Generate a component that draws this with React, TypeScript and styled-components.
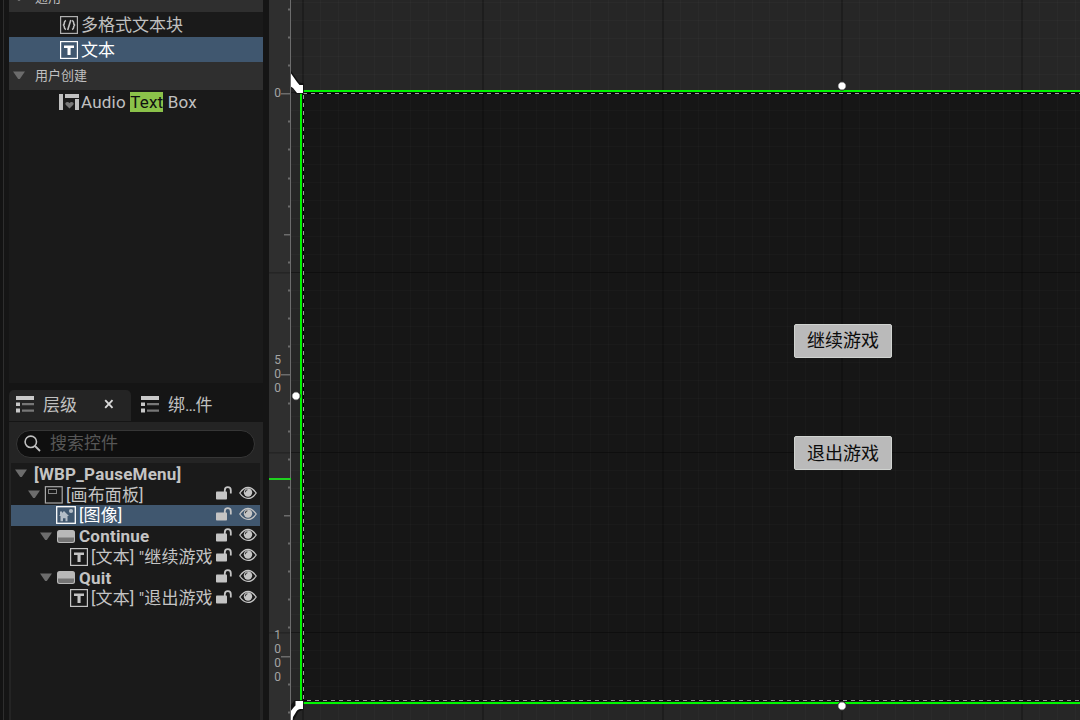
import React from "react";
import styled, { createGlobalStyle } from "styled-components";

const GlobalStyle = createGlobalStyle`
  * { box-sizing: border-box; }
  body {
    margin: 0;
    overflow: hidden;
    background: #151515;
    font-family: Roboto, "Noto Sans CJK SC", sans-serif;
    color: #c0c0c0;
  }
`;

const Editor = styled.div`
  display: flex;
  width: 1080px;
  height: 720px;
  overflow: hidden;
  background: #151515;
`;

const DockEdge = styled.div`
  flex: none;
  width: 4px;
  margin-right: 5px;
  background: #131313;
  border-right: 1px solid #2e2e2e;
`;

const Sidebar = styled.aside`
  flex: none;
  display: flex;
  flex-direction: column;
  width: 254px;
  margin-right: 6px;
`;

const Palette = styled.section`
  height: 383px;
  flex: none;
  overflow: hidden;
  background: #1a1a1a;
`;

const CategoryRow = styled.div<{ $clipped?: boolean }>`
  display: flex;
  align-items: center;
  height: 28px;
  margin-top: ${(p) => (p.$clipped ? "-16px" : "0")};
  padding: 0 0 1px 3px;
  gap: 9px;
  background: #2f2f2f;
  font-size: 13px;
  line-height: 28px;
`;

const PaletteRow = styled.div<{ $selected?: boolean }>`
  display: flex;
  align-items: center;
  height: 25px;
  padding-left: 50px;
  gap: 3px;
  background: ${(p) => (p.$selected ? "#40576f" : "transparent")};
  color: ${(p) => (p.$selected ? "#ffffff" : "#c0c0c0")};
  font-size: 17px;
  line-height: 25px;
  white-space: pre;
`;

const PaletteLabel = styled.span`
  padding-top: 2px;
`;

const LatinLabel = styled.span`
  margin-left: -1px;
  letter-spacing: 0.2px;
`;

const Match = styled.mark`
  display: inline-block;
  height: 20px;
  line-height: 20px;
  background: #8bc24a;
  color: #101010;
`;

const TabBar = styled.div`
  display: flex;
  flex: none;
  height: 32px;
  margin-top: 7px;
`;

const Tab = styled.div<{ $active?: boolean }>`
  display: flex;
  align-items: center;
  width: ${(p) => (p.$active ? "122px" : "110px")};
  height: 31px;
  padding: 0 17px 3px ${(p) => (p.$active ? "7px" : "10px")};
  gap: 9px;
  border-radius: 5px 5px 0 0;
  background: ${(p) => (p.$active ? "#242424" : "transparent")};
  font-size: 17px;
  line-height: 28px;
  white-space: nowrap;
`;

const TabLabel = styled.span`
  padding-top: 1px;
`;

const Ellipsis = styled.span`
  letter-spacing: -1px;
`;

const CloseButton = styled.span`
  display: flex;
  margin-left: auto;
`;

const Hierarchy = styled.section`
  flex: 1;
  display: flex;
  flex-direction: column;
  padding: 8px 3px 0 2px;
  background: #242424;
`;

const SearchBox = styled.div`
  display: flex;
  align-items: center;
  flex: none;
  width: 239px;
  height: 28px;
  margin: 0 0 5px 5px;
  padding: 0 0 1px 7px;
  gap: 9px;
  border: 1px solid #363636;
  border-radius: 14px;
  background: #0f0f0f;
  color: #575757;
  font-size: 17px;
  line-height: 25px;
`;

const Tree = styled.div`
  flex: 1;
  padding-top: 0.4px;
  background: #1a1a1a;
`;

const TreeRow = styled.div<{ $indent: number; $selected?: boolean; $bold?: boolean }>`
  display: flex;
  align-items: center;
  height: 20.75px;
  padding: 0 3px 0 ${(p) => p.$indent}px;
  background: ${(p) => (p.$selected ? "#40576f" : "transparent")};
  color: ${(p) => (p.$selected ? "#ffffff" : "#c4c4c4")};
  font-size: 17px;
  font-weight: ${(p) => (p.$bold ? 700 : 400)};
  letter-spacing: ${(p) => (p.$bold ? "0.22px" : "0.1px")};
  line-height: 20px;
  white-space: nowrap;
`;

const TreeName = styled.span<{ $gap: number }>`
  flex: 1;
  min-width: 0;
  height: 20px;
  margin-left: ${(p) => p.$gap}px;
`;

const RowActions = styled.span`
  display: flex;
  flex: none;
  align-items: center;
  gap: 7px;
  height: 18px;
  margin-bottom: 3px;
`;

const Ruler = styled.div`
  flex: none;
  width: 22px;
  height: 720px;
  background: #2f2f2f;
`;

const Surface = styled.main`
  position: relative;
  flex: 1;
  overflow: hidden;
  background: #262626;
`;

const Frame = styled.div`
  position: absolute;
  left: 11px;
  top: 92px;
  width: 900px;
  height: 611px;
  background: #161616;
`;

const Overlay = styled.svg`
  position: absolute;
  left: 0;
  top: 0;
`;

const CanvasButton = styled.div<{ $top: number; $drop?: number }>`
  position: absolute;
  left: 503px;
  top: ${(p) => p.$top}px;
  display: flex;
  align-items: center;
  justify-content: center;
  width: 98px;
  height: 34px;
  padding-top: ${(p) => p.$drop ?? 0}px;
  border: 1px solid #d0d3d0;
  border-radius: 2px;
  background: #bababa;
  color: #0c0c0c;
  font-size: 18px;
  line-height: 32px;
`;

const Chevron = () => (
  <svg width="14" height="9" viewBox="0 0 14 9">
    <path d="M1 .5h12L7.8 8H6.2Z" fill="#6c6c6c" />
  </svg>
);

const TextIcon = () => (
  <svg width="19" height="18" viewBox="0 0 19 18">
    <rect x="1.600" y=".6" width="16.800" height="16.800" fill="none" stroke="currentColor" strokeWidth="1.200" />
    <path d="M5 4.500h10v2.500h-3.400v7H8.500V7H5Z" fill="currentColor" />
  </svg>
);

const RichTextIcon = () => (
  <svg width="19" height="18" viewBox="0 0 19 18">
    <rect x="1.600" y=".6" width="16.800" height="16.800" fill="none" stroke="#b0b0b0" strokeWidth="1.200" />
    <path d="M7 4.500Q5.300 5 5.300 7T3.800 9Q5.300 9 5.300 11T7 13.500M13 4.500Q14.700 5 14.700 7T16.200 9Q14.700 9 14.700 11T13 13.500M11.800 4 8.700 14" fill="none" stroke="#c0c0c0" strokeWidth="1.600" />
  </svg>
);

const UserWidgetIcon = () => (
  <svg width="20" height="18" viewBox="0 1 20 18">
    <path d="M0 1h4v16H0ZM6 1h14v4H6ZM16 6h4v11h-4Z" fill="#c0c0c0" />
    <path d="M10.500 15.500 6.700 11.800c-1.500-2 1.800-4 3.800-1.800 2-2.200 5.300-.2 3.800 1.800Z" fill="#777" />
  </svg>
);

const ListIcon = () => (
  <svg width="18" height="17" viewBox="0 0 18 17">
    <path d="M0 0h18v4H0ZM0 6.500h4v3.500H0ZM0 12.500h4v4H0Z" fill="#c8c8c8" />
    <path d="M6 7h12v2.200H6ZM6 13.500h12v2.200H6Z" fill="#777" />
  </svg>
);

const CanvasPanelIcon = () => (
  <svg width="19" height="18" viewBox="0 0 19 18">
    <rect x="1.400" y=".7" width="16.800" height="16.300" fill="none" stroke="#a8a8a8" strokeWidth="1.200" />
    <rect x="4.500" y="3.500" width="8" height="4" fill="none" stroke="#858585" />
  </svg>
);

const ImageIcon = () => (
  <svg width="20" height="18" viewBox="0 0 20 18">
    <rect x=".7" y=".7" width="18.600" height="16.600" fill="none" stroke="#fff" strokeWidth="1.300" />
    <path d="m3 10 1-1V5.500h2V7l2-2 5 5h-1.500v5.300H9.500v-3h-2.500v3H4.500V10Z" fill="#b3bdc7" />
    <circle cx="15" cy="5" r="2.100" fill="#b3bdc7" />
  </svg>
);

const ButtonIcon = () => (
  <svg width="18" height="13" viewBox="0 0 18 13">
    <rect width="18" height="13" rx="2.500" fill="#b8b8b8" />
    <path d="M1 7.500h16V10q0 2-1.500 2h-13Q1 12 1 10Z" fill="#747474" />
  </svg>
);

const UnlockIcon = () => (
  <svg width="16" height="14" viewBox="0 0 16 14">
    <rect x="0" y="5.500" width="11" height="8" rx=".8" fill="#c4c4c4" />
    <path d="M8.800 6V4.200a3 3 0 0 1 6 0V7.500" fill="none" stroke="#c4c4c4" strokeWidth="1.800" />
  </svg>
);

const EyeIcon = () => (
  <svg width="18" height="14" viewBox="0 0 18 14">
    <path d="M.8 7Q4.500 1.500 9 1.500T17.200 7Q13.500 12.400 9 12.400T.8 7Z" fill="none" stroke="#c4c4c4" strokeWidth="1.300" />
    <circle cx="9" cy="6.500" r="4.200" fill="#c4c4c4" />
    <path d="M6.300 6.200Q6.500 4 8.400 3.700" fill="none" stroke="#333" strokeWidth="1.100" />
  </svg>
);

const SearchIcon = () => (
  <svg width="17" height="17" viewBox="0 0 17 17">
    <circle cx="6.800" cy="6.800" r="5.700" fill="none" stroke="#c0c0c0" strokeWidth="1.600" />
    <path d="m11 11 5 5" stroke="#c0c0c0" strokeWidth="1.800" />
  </svg>
);

type Node = {
  name: string;
  indent: number;
  icon?: React.ReactNode;
  gap: number;
  expandable?: boolean;
  bold?: boolean;
  selected?: boolean;
  root?: boolean;
};

const nodes: Node[] = [
  { name: "[WBP_PauseMenu]", indent: 3, gap: 6, expandable: true, bold: true, root: true },
  { name: "[画布面板]", indent: 16, icon: <CanvasPanelIcon />, gap: 3, expandable: true },
  { name: "[图像]", indent: 45, icon: <ImageIcon />, gap: 3, selected: true },
  { name: "Continue", indent: 28, icon: <ButtonIcon />, gap: 4, expandable: true, bold: true },
  { name: '[文本] "继续游戏', indent: 58, icon: <TextIcon />, gap: 3 },
  { name: "Quit", indent: 28, icon: <ButtonIcon />, gap: 4, expandable: true, bold: true },
  { name: '[文本] "退出游戏', indent: 58, icon: <TextIcon />, gap: 3 },
];

const TreeIcon = styled.span`
  display: flex;
  flex: none;
`;

const ExpandArrow = styled.span<{ $space: number }>`
  display: flex;
  flex: none;
  margin-right: ${(p) => p.$space}px;
`;

const RULER_ORIGIN = 93.7;
const RULER_STEP = 28.12;

const RulerScale = () => (
  <svg width="22" height="720" viewBox="0 0 22 720">
    {[272, 452, 632].map((y) => (
      <rect key={y} y={y} width="22" height="1.500" fill="#252525" />
    ))}
    <rect x="21" width="1" height="720" fill="#6c6c6c" />
    {Array.from({ length: 26 }, (_, i) => i - 3).map((i) => {
      const y = Math.round(RULER_ORIGIN + i * RULER_STEP - 0.5);
      const major = i % 5 === 0;
      const length = i % 10 === 0 ? 9 : major ? 6 : 2;
      return <rect key={i} x={21 - length} y={major ? y : y - 0.5} width={length} height={major ? 1.5 : 2} fill="#6c6c6c" />;
    })}
    <rect y="478" width="22" height="2" fill="#1fd21f" />
    <g fill="#a4a4a4" fontSize="12" textAnchor="middle" fontFamily="Roboto, sans-serif">
      <text x="8.500" y="97">0</text>
      {["5", "0", "0"].map((d, i) => (
        <text key={i} x="8.500" y={364 + i * 14}>{d}</text>
      ))}
      {["1", "0", "0", "0"].map((d, i) => (
        <text key={i} x="8.500" y={639 + i * 14}>{d}</text>
      ))}
    </g>
  </svg>
);

const gridX = Array.from({ length: 45 }, (_, i) => i);
const gridY = Array.from({ length: 41 }, (_, i) => i - 5);

const Grid = () => (
  <Overlay width="789" height="720">
    {gridX.map((i) => (
      <rect
        key={i}
        x={Math.round(11 + i * 17.98)}
        width={i % 10 ? 1 : 2}
        height="720"
        fill={i % 10 ? "#fff" : "#000"}
        opacity={i % 10 ? 0.02 : 0.22}
      />
    ))}
    {gridY.map((i) => (
      <rect
        key={i}
        y={92 + i * 18}
        width="789"
        height="1"
        fill={i % 10 ? "#fff" : "#000"}
        opacity={i % 10 ? 0.02 : 0.35}
      />
    ))}
  </Overlay>
);

const handles = [
  [551, 86],
  [5, 396],
  [551, 706],
];

const Selection = () => (
  <Overlay width="789" height="720">
    <path d="M12.500 93V700M12 93.500H789M12 700.500H789" fill="none" stroke="#000" />
    <path d="M12.500 95V700M12 93.500H789M16 700.500H789" fill="none" stroke="#a0a0a0" strokeDasharray="4 4" />
    <path d="M12 90h777v2H12ZM9 93h2v609H9ZM12 702h777v2H12Z" fill="#00f600" />
    <path d="M-1 70.500 7.500 83 12 84v9H5l-1-3-5-4Z" fill="#111" stroke="#111" strokeWidth="1.500" />
    <path d="M-1 72v14l3 2 4 5h6v-8H8.500L6 82Z" fill="#fff" />
    <path d="M-1 707 4 701h8v8L7 711l-5 9h-3Z" fill="#111" stroke="#111" strokeWidth="1.500" />
    <path d="M-1 712 3 707l1.500-1.500V701H12v8H9q-3 .5-4.500 4L2 717l-.5 4H-1Z" fill="#fff" />
    {handles.map(([x, y]) => (
      <circle key={`${x}-${y}`} cx={x} cy={y} r="4.200" fill="#fff" stroke="#222" />
    ))}
  </Overlay>
);

export default function App() {
  return (
    <>
      <GlobalStyle />
      <Editor>
        <DockEdge />
        <Sidebar>
          <Palette>
            <CategoryRow $clipped><Chevron />通用</CategoryRow>
            <PaletteRow><RichTextIcon /><PaletteLabel>多格式文本块</PaletteLabel></PaletteRow>
            <PaletteRow $selected><TextIcon /><PaletteLabel>文本</PaletteLabel></PaletteRow>
            <CategoryRow><Chevron />用户创建</CategoryRow>
            <PaletteRow>
              <UserWidgetIcon />
              <LatinLabel>Audio <Match>Text</Match> Box</LatinLabel>
            </PaletteRow>
          </Palette>
          <TabBar>
            <Tab $active>
              <ListIcon /><TabLabel>层级</TabLabel>
              <CloseButton>
                <svg width="10" height="10" viewBox="0 0 10 10">
                  <path d="m1.200 1.200 7.300 7.600m0-7.600-7.300 7.600" stroke="#d8d8d8" strokeWidth="1.900" />
                </svg>
              </CloseButton>
            </Tab>
            <Tab><ListIcon /><TabLabel>绑<Ellipsis>...</Ellipsis>件</TabLabel></Tab>
          </TabBar>
          <Hierarchy>
            <SearchBox><SearchIcon />搜索控件</SearchBox>
            <Tree>
              {nodes.map((n, i) => (
                <TreeRow key={i} $indent={n.indent} $selected={n.selected} $bold={n.bold}>
                  {n.expandable && <ExpandArrow $space={n.icon ? (n.bold ? 4 : 3) : 0}><Chevron /></ExpandArrow>}
                  {n.icon && <TreeIcon>{n.icon}</TreeIcon>}
                  <TreeName $gap={n.gap}>{n.name}</TreeName>
                  {!n.root && <RowActions><UnlockIcon /><EyeIcon /></RowActions>}
                </TreeRow>
              ))}
            </Tree>
          </Hierarchy>
        </Sidebar>
        <Ruler><RulerScale /></Ruler>
        <Surface>
          <Frame />
          <Grid />
          <Selection />
          <CanvasButton $top={324}>继续游戏</CanvasButton>
          <CanvasButton $top={436} $drop={2}>退出游戏</CanvasButton>
        </Surface>
      </Editor>
    </>
  );
}
